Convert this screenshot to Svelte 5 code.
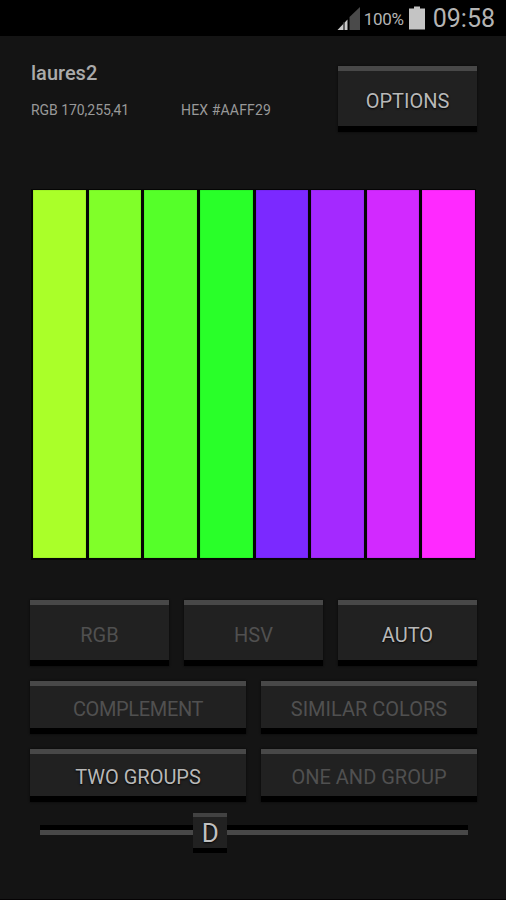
<script lang="ts">
  let paletteName = 'laures2';
  let rgb = '170,255,41';
  let hex = '#AAFF29';

  const colors = [
    '#aaff29', '#80ff29', '#55ff29', '#29ff29',
    '#7b29ff', '#a429ff', '#d229ff', '#ff29ff'
  ];

  const modes = ['RGB', 'HSV', 'AUTO'];
  const schemes = ['COMPLEMENT', 'SIMILAR COLORS', 'TWO GROUPS', 'ONE AND GROUP'];

  let mode = 'AUTO';
  let scheme = 'TWO GROUPS';
  let position = 39.8;
</script>

<div class="screen">
  <div class="status-bar">
    <svg class="signal" width="24" height="24" viewBox="0 0 24 24">
      <path d="M0 24.5 L10.5 13.5 V24.5 Z" fill="#c8c8c8"/>
      <path d="M7 16 V24.5" stroke="#333" stroke-width="1.4"/>
      <path d="M12.5 11 L23 1 V24 H12.5 Z" fill="#4a4a4a"/>
    </svg>
    <span class="percent">100%</span>
    <svg class="battery" width="16" height="24" viewBox="0 0 16 24">
      <path d="M5 0.5 H11 V2.5 H16 V23.5 H0 V2.5 H5 Z" fill="#c4c4c4"/>
    </svg>
    <span class="clock">09:58</span>
  </div>

  <header class="header">
    <div class="info">
      <div class="name">{paletteName}</div>
      <div class="values">
        <span class="rgb">RGB {rgb}</span>
        <span class="hex">HEX {hex}</span>
      </div>
    </div>
    <button class="btn tall active options">OPTIONS</button>
  </header>

  <div class="palette">
    {#each colors as color}
      <div class="swatch" style="background-color: {color}"></div>
    {/each}
  </div>

  <div class="modes">
    {#each modes as item}
      <button class="btn tall" class:active={mode === item} on:click={() => (mode = item)}>
        {item}
      </button>
    {/each}
  </div>

  <div class="schemes">
    {#each schemes as item}
      <button
        class="btn"
        class:active={scheme === item}
        class:condensed={item === 'COMPLEMENT'}
        on:click={() => (scheme = item)}
      >
        {item}
      </button>
    {/each}
  </div>

  <div class="slider">
    <div class="track"></div>
    <!-- Thumb sits on top of the track -->
    <div class="thumb" style="left: {position}%">D</div>
  </div>
</div>

<style>
  :global(body) {
    background: #141414;
  }

  .screen {
    box-sizing: border-box;
    width: 506px;
    height: 900px;
    overflow: hidden;
    background: #141414;
    border-bottom: 1px solid #050304;
    color: #aaa;
    font-family: Roboto, sans-serif;
  }

  .status-bar {
    box-sizing: border-box;
    display: flex;
    align-items: center;
    justify-content: flex-end;
    height: 36px;
    padding-right: 11px;
    background: #000;
    color: #b4b4b4;
  }

  .signal {
    margin-right: 3px;
  }

  .percent {
    width: 40px;
    margin-right: 5px;
    padding-top: 1px;
    font-size: 17px;
    letter-spacing: -0.3px;
    white-space: nowrap;
  }

  .battery {
    margin: 0 8px 1px 0;
  }

  .clock {
    padding-top: 2px;
    font-size: 25px;
    line-height: 36px;
  }

  .header {
    display: flex;
    justify-content: space-between;
    padding: 30px 29px 0 31px;
  }

  .name {
    margin-top: -5px;
    font-size: 20px;
    font-weight: 500;
    line-height: 24px;
  }

  .values {
    display: flex;
    margin-top: 16px;
    font-size: 14px;
    line-height: 18px;
    color: #999;
  }

  .rgb {
    width: 150px;
    letter-spacing: -0.05px;
  }

  .hex {
    letter-spacing: 0.15px;
  }

  .btn {
    box-sizing: border-box;
    height: 53px;
    padding: 4px 0 0;
    border: 0 solid #000;
    border-top: 5px solid #484848;
    border-bottom-width: 6px;
    background: #212121;
    box-shadow: 0 0 2px #080808;
    color: #505050;
    font-family: inherit;
    font-size: 20px;
    font-weight: 400;
  }

  .btn.tall {
    height: 66px;
  }

  .btn.active {
    color: #b8b8b8;
    text-shadow: 0 1px 2px #000;
  }

  .btn.condensed {
    letter-spacing: -0.35px;
  }

  .options {
    width: 139px;
  }

  .palette {
    display: grid;
    grid-template-columns: repeat(8, 1fr);
    gap: 3px;
    box-sizing: border-box;
    width: 445px;
    height: 371px;
    margin: 57px 0 0 31px;
    padding: 1px 1px 2px 2px;
    background: #050505;
  }

  .swatch {
    box-shadow: inset 0 0 1px rgba(0, 0, 0, 0.5);
  }

  .modes {
    display: grid;
    grid-template-columns: repeat(3, 1fr);
    gap: 15px;
    padding: 40px 29px 0 30px;
  }

  .schemes {
    display: grid;
    grid-template-columns: repeat(2, 1fr);
    gap: 15px;
    padding: 15px 29px 0 30px;
  }

  .slider {
    position: relative;
    width: 428px;
    height: 40px;
    margin: 11px 0 0 40px;
  }

  .track {
    position: absolute;
    top: 12px;
    width: 100%;
    height: 5px;
    border-top: 5px solid #000;
    background: #484848;
  }

  .thumb {
    position: absolute;
    top: 0;
    box-sizing: border-box;
    width: 34px;
    height: 40px;
    margin-left: -17px;
    border-top: 4px solid #424242;
    border-bottom: 5px solid #000;
    background: #212121;
    color: #c0c0c0;
    font-size: 26px;
    line-height: 33px;
    text-align: center;
    text-shadow: 0 1px 2px #000;
  }
</style>
